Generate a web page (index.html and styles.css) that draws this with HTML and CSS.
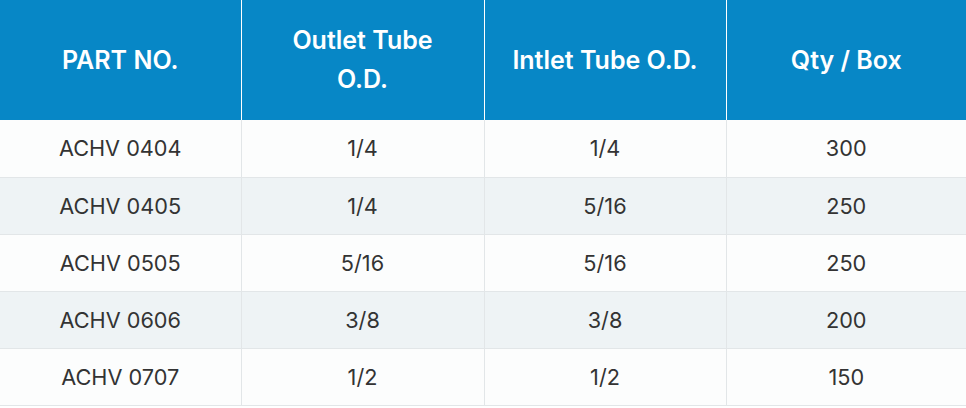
FILE: index.html
```html
<!DOCTYPE html>
<html>
<head>
<meta charset="utf-8">
<link rel="stylesheet" href="styles.css">
</head>
<body>
<table class="spec">
  <colgroup>
    <col class="c1"><col class="c2"><col class="c3"><col class="c4">
  </colgroup>
  <thead>
    <tr>
      <th>PART NO.</th>
      <th>Outlet Tube<br>O.D.</th>
      <th>Intlet Tube O.D.</th>
      <th>Qty / Box</th>
    </tr>
  </thead>
  <tbody>
    <tr><td>ACHV 0404</td><td>1/4</td><td>1/4</td><td>300</td></tr>
    <tr><td>ACHV 0405</td><td>1/4</td><td>5/16</td><td>250</td></tr>
    <tr><td>ACHV 0505</td><td>5/16</td><td>5/16</td><td>250</td></tr>
    <tr><td>ACHV 0606</td><td>3/8</td><td>3/8</td><td>200</td></tr>
    <tr><td>ACHV 0707</td><td>1/2</td><td>1/2</td><td>150</td></tr>
  </tbody>
</table>
</body>
</html>
```
FILE: styles.css
```css
html, body {
  margin: 0;
  padding: 0;
  background: #ffffff;
}
body {
  font-family: Inter, "Noto Sans", sans-serif;
  color: #333333;
}
.spec {
  width: 966px;
  border-collapse: collapse;
  table-layout: fixed;
}
.c1 { width: 241px; }
.c2 { width: 243px; }
.c3 { width: 242px; }
.c4 { width: 240px; }
.spec th {
  background: #0787c6;
  color: #ffffff;
  font-weight: 600;
  font-size: 25px;
  line-height: 39px;
  height: 120px;
  padding: 0 6px;
  box-sizing: border-box;
  border-left: 1px solid #ffffff;
  text-align: center;
  vertical-align: middle;
}
.spec th:first-child { border-left: none; }
.spec td {
  height: 57px;
  box-sizing: border-box;
  padding: 0 6px;
  font-size: 21.7px;
  text-align: center;
  vertical-align: middle;
  border-left: 1px solid #e2e6e8;
  border-bottom: 1px solid #e2e6e8;
}
.spec td:first-child { border-left: none; }
.spec tbody tr:nth-child(odd) td { background: #fcfdfd; }
.spec tbody tr:nth-child(even) td { background: #eef3f5; }
```
